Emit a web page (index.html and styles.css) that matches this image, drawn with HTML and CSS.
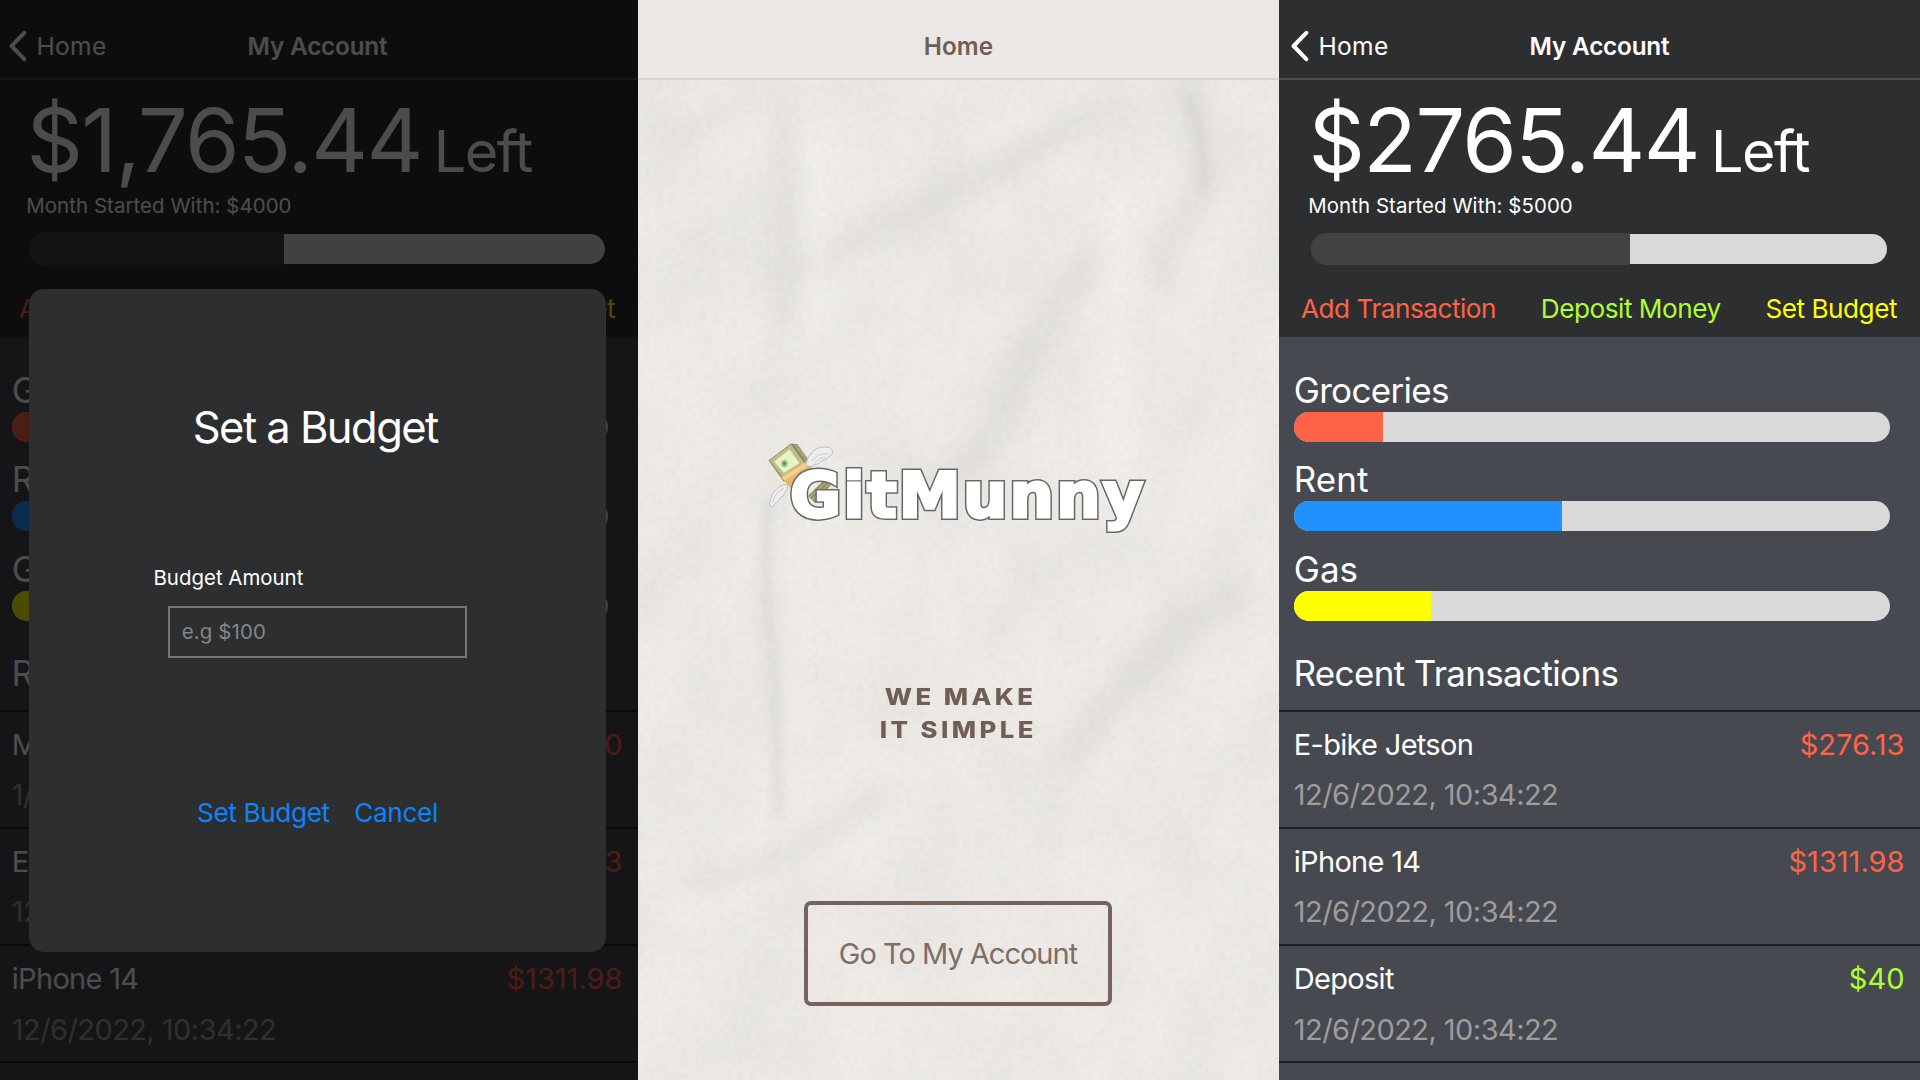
FILE: index.html
```html
<!DOCTYPE html>
<html lang="en">
<head>
<meta charset="utf-8">
<title>GitMunny</title>
<link rel="stylesheet" href="styles.css">
</head>
<body>
<main class="showcase">

  <section class="screen screen--left">
    <div class="account">
      <header class="nav">
        <a class="nav-back"><svg class="chevron" viewBox="0 0 20 32"><path d="M16.3 2.8 3.6 16l12.7 13.2"/></svg>Home</a>
        <h1 class="nav-title">My Account</h1>
      </header>
      <div class="summary">
        <p class="balance"><span class="balance-amount">$1,765.44</span><span class="balance-label">Left</span></p>
        <p class="started">Month Started With: $4000</p>
        <div class="meter"><div class="meter-used" style="width:44.2%"></div><div class="meter-rest"></div></div>
        <div class="actions"><a class="red">Add Transaction</a><a class="green">Deposit Money</a><a class="yellow">Set Budget</a></div>
      </div>
      <div class="details">
        <div class="category"><h2>Groceries</h2><div class="bar"><div class="bar-fill fill-red" style="width:15%"></div></div></div>
        <div class="category"><h2 class="short">Rent</h2><div class="bar"><div class="bar-fill fill-blue" style="width:45%"></div></div></div>
        <div class="category"><h2 class="short">Gas</h2><div class="bar"><div class="bar-fill fill-yellow" style="width:23%"></div></div></div>
        <h2 class="recent">Recent Transactions</h2>
      </div>
      <ul class="transactions">
        <li><div class="line"><span>Movie</span><span class="sum red">$20</span></div><time>1/6/2023, 10:34:22</time></li>
        <li><div class="line"><span>E-bike Jetson</span><span class="sum red">$276.13</span></div><time>12/6/2022, 10:34:22</time></li>
        <li><div class="line"><span>iPhone 14</span><span class="sum red">$1311.98</span></div><time>12/6/2022, 10:34:22</time></li>
        <li></li>
      </ul>
    </div>
    <div class="scrim"></div>
    <form class="modal">
      <h2 class="modal-title">Set a Budget</h2>
      <label class="modal-label" for="amount">Budget Amount</label>
      <input class="modal-input" id="amount" type="text" placeholder="e.g $100">
      <div class="modal-actions"><a>Set Budget</a><a>Cancel</a></div>
    </form>
  </section>

  <section class="screen screen--home">
    <svg class="paper" viewBox="0 0 641 1000" preserveAspectRatio="none">
      <defs>
        <filter id="grain" x="0" y="0" width="100%" height="100%">
          <feTurbulence type="fractalNoise" baseFrequency="0.16" numOctaves="3" seed="4"/>
          <feColorMatrix values="0 0 0 0 .42  0 0 0 0 .42  0 0 0 0 .40  .16 0 0 0 -.05"/>
        </filter>
        <filter id="mottle" x="0" y="0" width="100%" height="100%">
          <feTurbulence type="fractalNoise" baseFrequency="0.012 0.009" numOctaves="3" seed="11"/>
          <feColorMatrix values="0 0 0 0 .5  0 0 0 0 .5  0 0 0 0 .48  .26 0 0 0 -.09"/>
        </filter>
        <filter id="soft" x="-20%" y="-20%" width="140%" height="140%"><feGaussianBlur stdDeviation="12"/></filter>
        <filter id="crisp" x="-20%" y="-20%" width="140%" height="140%"><feGaussianBlur stdDeviation="5"/></filter>
      </defs>
      <rect width="641" height="1000" fill="#efece8"/>
      <rect width="641" height="1000" filter="url(#mottle)"/>
      <g filter="url(#soft)" class="folds">
        <path d="M545 5q22 50 20 88t-40 72q-12 20 4 40" stroke-width="24"/>
        <path d="M475 8Q390 80 290 125T170 190" stroke-width="20"/>
        <path d="M460 175Q400 240 375 310T300 410" stroke-width="28"/>
        <path d="M148 30V245" stroke-width="18"/>
        <path d="M595 515Q500 570 430 680" stroke-width="26"/>
        <path d="M240 720Q150 790 60 810" stroke-width="22"/>
        <path d="M30 60Q90 30 150 2" stroke-width="14"/>
      </g>
      <g filter="url(#soft)" class="ridges">
        <path d="M484 110Q470 260 482 400" stroke-width="26"/>
        <path d="M178 60V250" stroke-width="18"/>
        <path d="M162 440V640" stroke-width="14"/>
        <path d="M20 840Q160 800 250 740" stroke-width="14"/>
        <path d="M330 60Q420 30 480 0" stroke-width="12"/>
      </g>
      <g filter="url(#crisp)" class="folds">
        <path d="M130 425q-6 60 2 130t8 180" stroke-width="11"/>
        <path d="M552 20q16 40 13 90" stroke-width="8"/>
      </g>
      <rect width="641" height="1000" filter="url(#grain)"/>
    </svg>
    <header class="nav nav--light"><h1 class="nav-title">Home</h1></header>
    <div class="welcome">
      <div class="logo">
        <svg class="cash" viewBox="0 0 90 80">
          <path d="M48 61 64 45l7 5-16 18z" fill="#8f9163"/>
          <path d="m50 62 16-15M52 65l17-16" stroke="#c3c69a" fill="none"/>
          <path d="M8.500 25.500 31 8.500l6.500.8L51 28 24 47z" fill="#8b8c62"/>
          <path d="m34.500 9.500 13 18M37 10l12.500 17" stroke="#b9bc93" fill="none"/>
          <path d="M9.500 25.500 31 9.500 44.500 28 22.500 42z" fill="#b8bd8d"/>
          <path d="m14 26.500 15.500-12L39.500 28 24 38z" fill="#eef0bf"/>
          <ellipse cx="24.500" cy="28.700" rx="3.300" ry="3.600" fill="#8fc48c"/>
          <circle cx="24.300" cy="28.600" r="1.500" fill="#3d9a5c"/>
          <path d="m21 42 25-15.500 8.500 9L49 44 32 54.500z" fill="#e9b566"/>
          <path d="m22 42.500 24-15 2.500 2.700L24.500 45.500z" fill="#f6d08c"/>
          <path d="M46 30c1-9 8-18 18-18 6 0 9 2 8.500 5.500 0 3-3 3.500-4.500 4.500-1 3-5 3-7 4.500-2 3-5 2-7 4-3 1.500-6 1-8-.5z" fill="#eceef0" stroke="#b4b5b8" stroke-width=".9"/>
          <path d="M52 26c4-6 10-8 17-7M55 28c3-4 6-5 10-5" stroke="#c6c8cb" fill="none"/>
          <path d="M28 49c-8 1-16 6-18 17-.5 4 .5 6.500 2 6 3-.5 2-4 5-5 2-1 2-4 5-5 3-2 2-5 5-7z" fill="#eceef0" stroke="#b4b5b8" stroke-width=".9"/>
          <path d="M24 53c-6 3-10 8-11 14" stroke="#c6c8cb" fill="none"/>
        </svg>
        <span class="wordmark" data-name="GitMunny">GitMunny</span>
      </div>
      <p class="tagline">WE MAKE<br>IT SIMPLE</p>
      <a class="enter">Go To My Account</a>
    </div>
  </section>

  <section class="screen screen--right">
    <div class="account">
      <header class="nav">
        <a class="nav-back"><svg class="chevron" viewBox="0 0 20 32"><path d="M16.3 2.8 3.6 16l12.7 13.2"/></svg>Home</a>
        <h1 class="nav-title">My Account</h1>
      </header>
      <div class="summary">
        <p class="balance"><span class="balance-amount">$2765.44</span><span class="balance-label">Left</span></p>
        <p class="started">Month Started With: $5000</p>
        <div class="meter"><div class="meter-used" style="width:55.4%"></div><div class="meter-rest"></div></div>
        <div class="actions"><a class="red">Add Transaction</a><a class="green">Deposit Money</a><a class="yellow">Set Budget</a></div>
      </div>
      <div class="details">
        <div class="category"><h2>Groceries</h2><div class="bar"><div class="bar-fill fill-red" style="width:15%"></div></div></div>
        <div class="category"><h2 class="short">Rent</h2><div class="bar"><div class="bar-fill fill-blue" style="width:45%"></div></div></div>
        <div class="category"><h2 class="short">Gas</h2><div class="bar"><div class="bar-fill fill-yellow" style="width:23%"></div></div></div>
        <h2 class="recent">Recent Transactions</h2>
      </div>
      <ul class="transactions">
        <li><div class="line"><span>E-bike Jetson</span><span class="sum red">$276.13</span></div><time>12/6/2022, 10:34:22</time></li>
        <li><div class="line"><span>iPhone 14</span><span class="sum red">$1311.98</span></div><time>12/6/2022, 10:34:22</time></li>
        <li><div class="line"><span>Deposit</span><span class="sum green">$40</span></div><time>12/6/2022, 10:34:22</time></li>
        <li></li>
      </ul>
    </div>
  </section>

</main>
</body>
</html>
```
FILE: styles.css
```css
* { box-sizing: border-box; margin: 0; padding: 0; }
body { width: 1920px; height: 1080px; overflow: hidden; background: #2d2e30; font-family: Inter, "Liberation Sans", sans-serif; color: #fff; }
h1, h2 { font-weight: 400; }
ul { list-style: none; }

.showcase { display: grid; grid-template-columns: 638px 641px 641px; height: 1080px; }
.screen { position: relative; height: 1080px; overflow: hidden; background: #464950; }
.account { display: flex; flex-direction: column; }
.screen--right .nav, .screen--right .summary, .screen--right .details, .screen--right .transactions li { padding-left: 3px; }

.red { color: #ff6347; }
.green { color: #adff2f; }
.yellow { color: #ff0; }

/* navigation bar */
.nav { display: grid; grid-template-columns: 1fr auto 1fr; align-items: center; height: 80px; background: #2d2e30; border-bottom: 2px solid #4b4d4f; font-size: 24.3px; line-height: 30px; }
.nav > * { margin-top: 14.4px; }
.nav-back { display: flex; align-items: center; padding-left: 7.5px; font-size: 24.6px; letter-spacing: .3px; }
.chevron { width: 20px; height: 32px; margin-right: 9px; fill: none; stroke: #fff; stroke-width: 4; stroke-linecap: round; stroke-linejoin: round; }
.nav-title { grid-column: 2; margin-right: 3px; font-size: 24.3px; font-weight: 600; letter-spacing: -.2px; }

/* balance summary */
.summary { height: 257px; padding-top: 19.7px; background: #2d2e30; }
.balance { display: flex; align-items: baseline; gap: 12px; height: 80px; padding-left: 26.5px; }
.balance-amount { font-size: 88px; line-height: 80px; letter-spacing: -1.6px; }
.balance-label { font-size: 57.5px; line-height: 50px; letter-spacing: -1.5px; }
.started { margin: 12.6px 0 0 26.3px; font-size: 20.4px; line-height: 28px; letter-spacing: .08px; }
.meter { display: flex; align-items: center; width: 576px; height: 32px; margin: 13px 0 0 29px; }
.meter-used { height: 32px; background: #424242; border-radius: 15px 0 0 15px; }
.meter-rest { flex: 1; height: 30px; background: #d9d9d9; border-radius: 0 15px 15px 0; }
.actions { display: flex; justify-content: space-between; width: 596px; margin: 28.2px 0 0 19px; font-size: 26.2px; line-height: 32px; letter-spacing: -.5px; white-space: nowrap; }

/* category bars */
.details { height: 372.5px; padding-top: 30.6px; }
.category { width: 596.5px; height: 89.6px; margin-left: 11.8px; }
.details h2 { font-size: 35px; line-height: 44px; letter-spacing: -.7px; }
.category h2.short { letter-spacing: 0; }
.bar { height: 30px; border-radius: 15px; background: #d9d9d9; overflow: hidden; }
.bar-fill { height: 100%; }
.fill-red { background: #ff6347; }
.fill-blue { background: #1e90ff; }
.fill-yellow { background: #ff0; }
.details h2.recent { margin: 14.6px 0 0 11.4px; letter-spacing: -.64px; }

/* transactions */
.transactions li { height: 117.3px; border-top: 2px solid #1d1f22; padding-top: 15px; }
.line { display: flex; justify-content: space-between; width: 622.5px; padding-left: 11.8px; font-size: 29px; line-height: 36px; letter-spacing: -.7px; }
.sum { letter-spacing: 0; }
.transactions time { display: block; margin: 14.6px 0 0 11.8px; font-size: 29px; line-height: 36px; letter-spacing: -.56px; color: #9d9d9d; }

/* budget dialog */
.scrim { position: absolute; inset: 0; background: rgba(0, 0, 0, .7); }
.modal { position: absolute; left: 29px; top: 288.7px; width: 577px; height: 663.6px; padding-top: 111.3px; border-radius: 15px; background: #2d2e30; }
.modal-title { margin-left: 163.7px; font-size: 43.5px; line-height: 54px; letter-spacing: -1.53px; }
.modal-label { display: block; margin: 110.2px 0 0 124.5px; font-size: 20.4px; line-height: 28px; letter-spacing: .02px; }
.modal-input { display: block; width: 299px; height: 52.5px; margin: 13.4px 0 0 139.2px; padding: 0 11.5px 1px; border: 2px solid #757677; border-radius: 0; background: transparent; color: #fff; font: 20.4px Inter, "Liberation Sans", sans-serif; letter-spacing: .15px; }
.modal-input::placeholder { color: #858687; opacity: 1; }
.modal-actions { display: flex; gap: 24.5px; margin: 139.4px 0 0 168px; font-size: 26.2px; line-height: 32px; letter-spacing: -.38px; color: #0a84ff; }

/* home screen */
.screen--home { background: #edebe7; color: #6f5f57; }
.paper { position: absolute; left: 0; top: 80px; width: 641px; height: 1000px; }
.folds { fill: none; stroke: #aaa9a5; opacity: .17; stroke-linecap: round; }
.ridges { fill: none; stroke: #f8f5f1; opacity: .6; stroke-linecap: round; }
.nav--light { background: #ebe7e4; border-color: #d6d3d0; }
.nav--light .nav-title { margin-right: 0; letter-spacing: .1px; }
.welcome { position: relative; display: flex; flex-direction: column; align-items: center; padding-top: 377.5px; }
.logo { position: relative; align-self: flex-start; height: 76px; margin-left: 152px; }
.cash { position: absolute; left: -30px; top: -22.5px; width: 90px; height: 80px; }
.wordmark { position: relative; isolation: isolate; display: block; font-family: "DejaVu Sans", sans-serif; font-weight: 700; font-size: 62.3px; line-height: 76px; color: #fff; -webkit-text-stroke: 2.8px #fff; stroke-linejoin: round; letter-spacing: 2.2px; }
.wordmark::before { content: attr(data-name); position: absolute; left: 0; top: 0; z-index: -1; -webkit-text-stroke: 5.8px #666; }
.tagline { margin-top: 147.8px; font-size: 22.4px; line-height: 32.3px; font-weight: 800; letter-spacing: 3px; text-align: center; text-indent: 4px; transform: scaleX(1.15); }
.enter { display: flex; align-items: center; justify-content: center; width: 308px; height: 104.5px; margin: 155.4px 1px 0 0; border: 4px solid #74645c; border-radius: 7px; font-size: 29px; letter-spacing: -1px; color: #7d6e67; }
```
